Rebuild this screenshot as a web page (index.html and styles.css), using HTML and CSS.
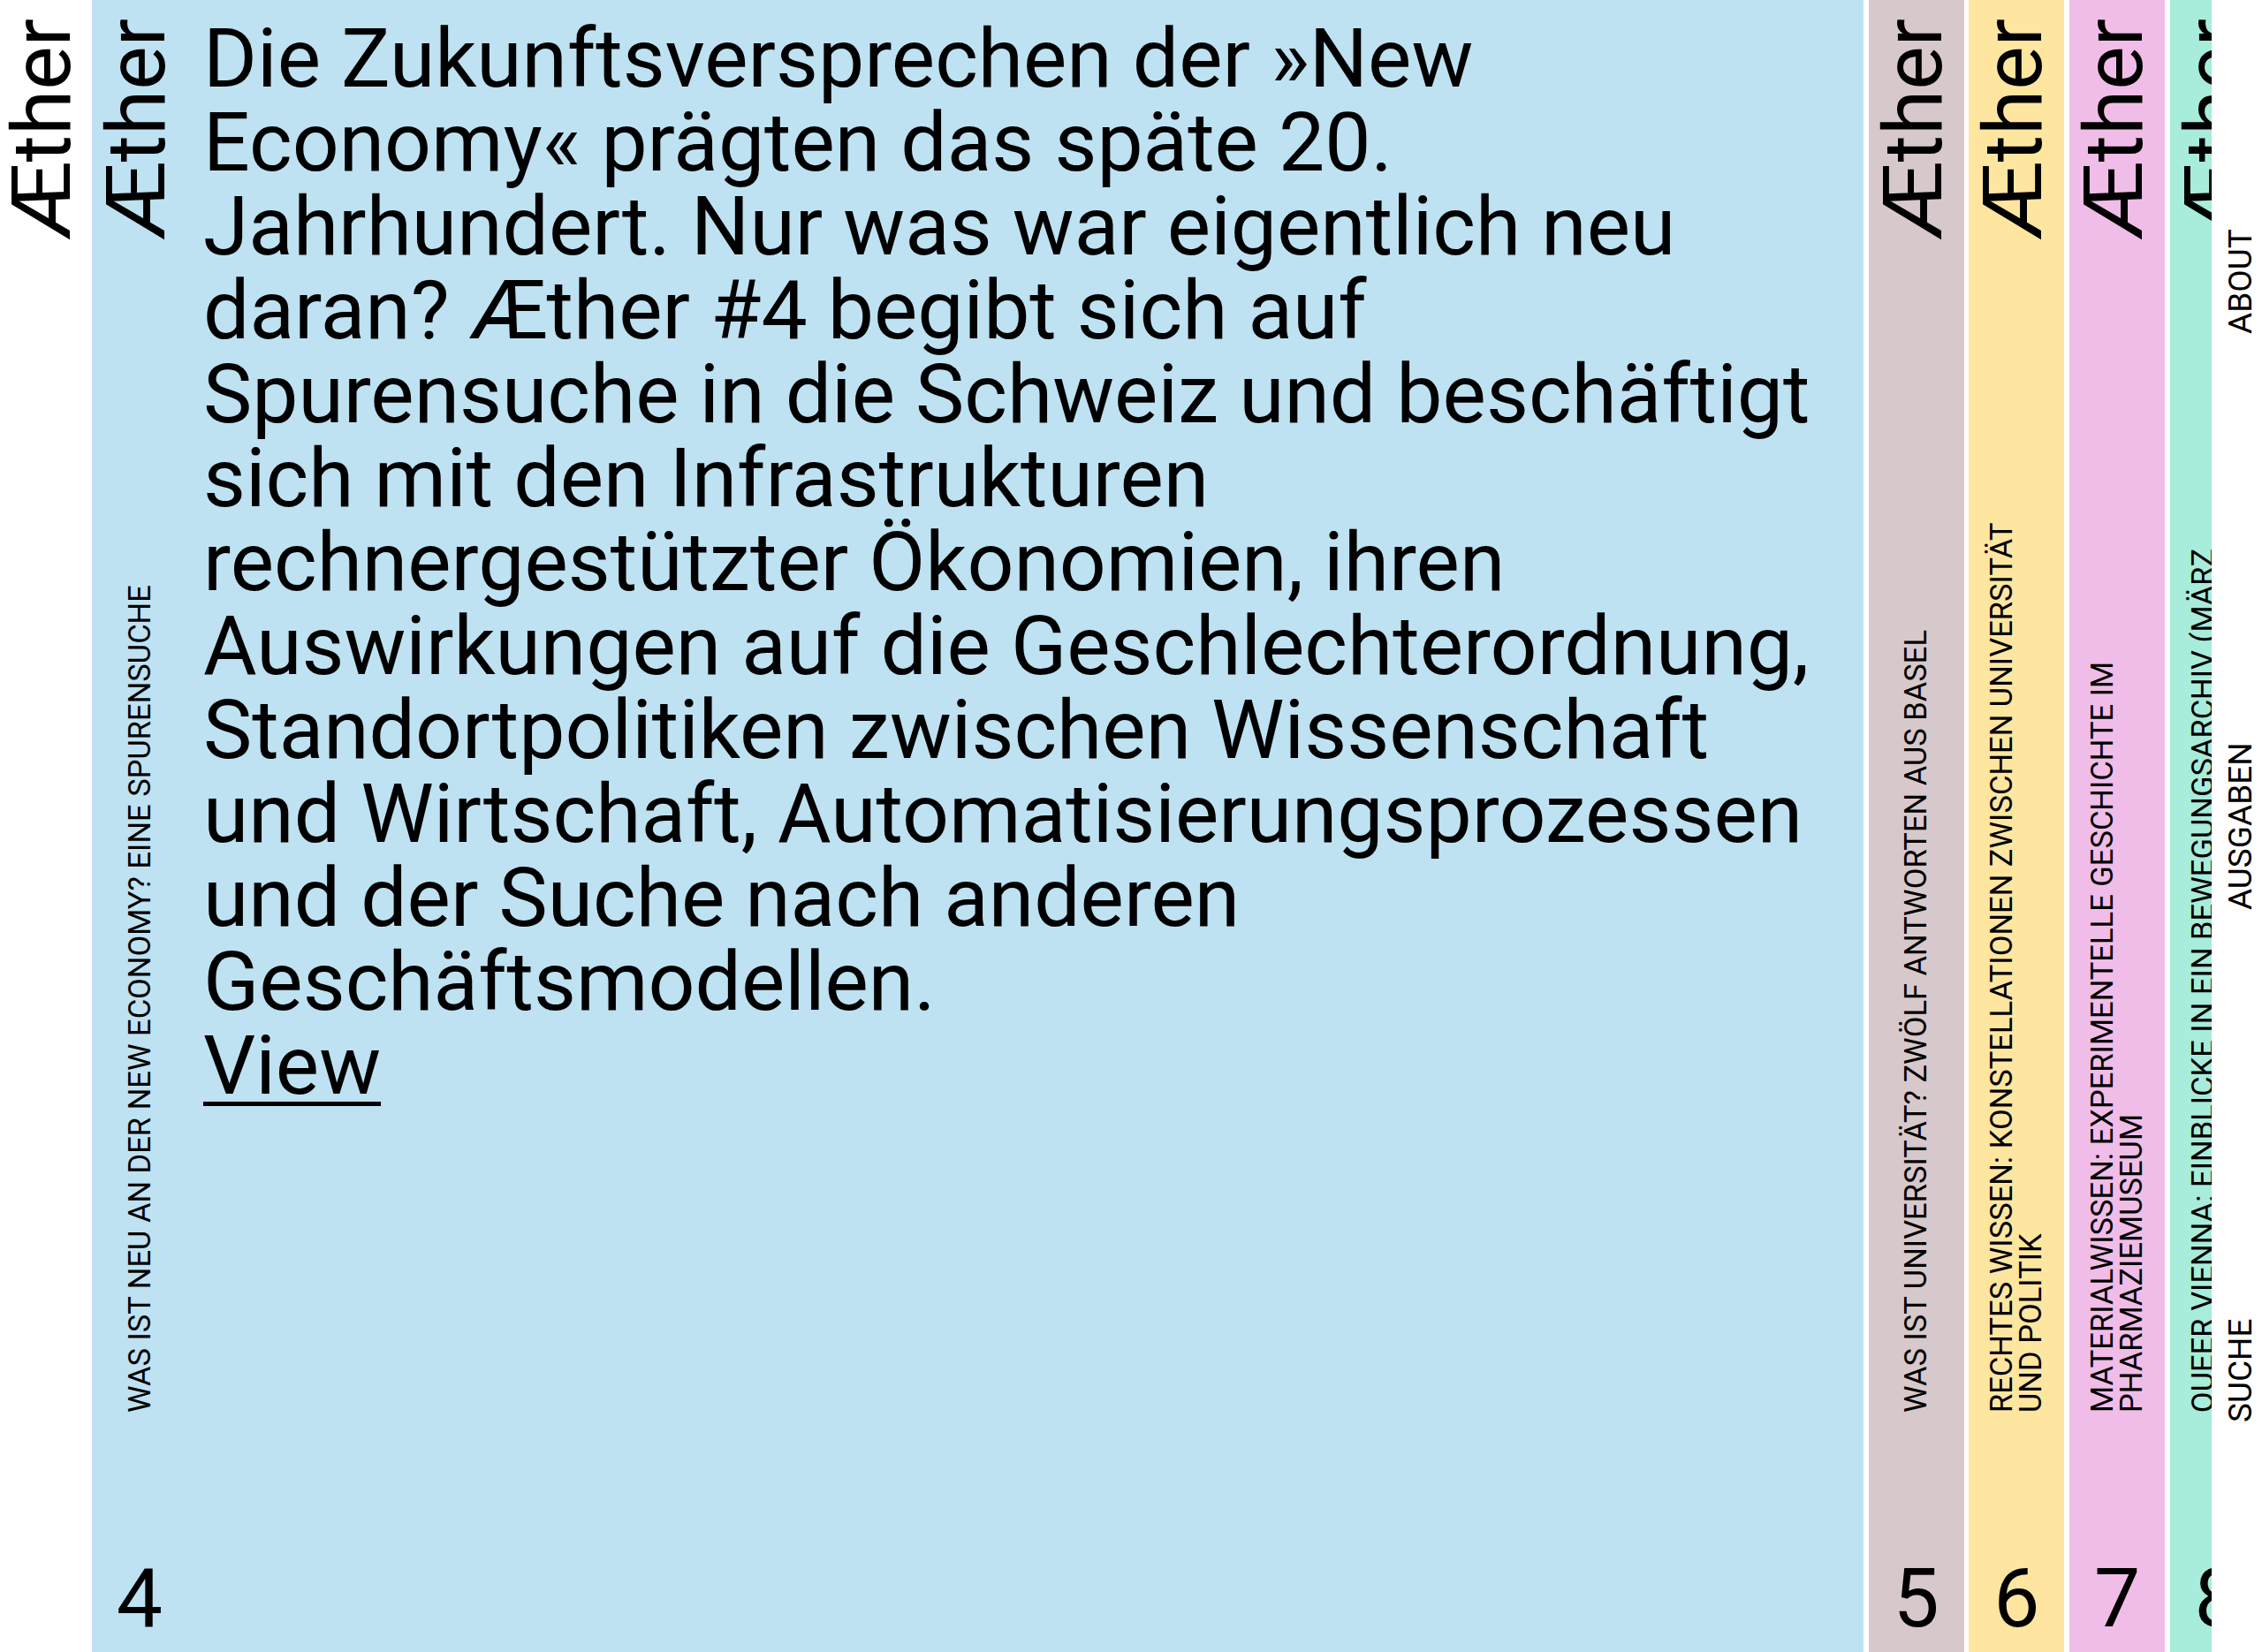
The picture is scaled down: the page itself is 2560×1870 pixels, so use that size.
FILE: index.html
```html
<!DOCTYPE html>
<html lang="de">
<head>
<meta charset="utf-8">
<title>Æther</title>
<link rel="stylesheet" href="styles.css">
</head>
<body>
<div class="page">
  <div class="brand-col">
    <div class="vert brand">Æther</div>
  </div>

  <main class="issues">
    <section class="issue open blue">
      <div class="spine">
        <div class="vert brand">Æther</div>
        <div class="vert title">WAS IST NEU AN DER NEW ECONOMY? EINE SPURENSUCHE</div>
        <div class="num">4</div>
      </div>
      <div class="intro">
        <p class="lead">Die Zukunftsversprechen der »New<br>Economy« prägten das späte 20.<br>Jahrhundert. Nur was war eigentlich neu<br>daran? Æther #4 begibt sich auf<br>Spurensuche in die Schweiz und beschäftigt<br>sich mit den Infrastrukturen<br>rechnergestützter Ökonomien, ihren<br>Auswirkungen auf die Geschlechterordnung,<br>Standortpolitiken zwischen Wissenschaft<br>und Wirtschaft, Automatisierungsprozessen<br>und der Suche nach anderen<br>Geschäftsmodellen.<br><a class="view" href="#">View</a></p>
      </div>
    </section>

    <section class="issue brown">
      <div class="spine">
        <div class="vert brand">Æther</div>
        <div class="vert title">WAS IST UNIVERSITÄT? ZWÖLF ANTWORTEN AUS BASEL</div>
        <div class="num">5</div>
      </div>
    </section>

    <section class="issue yellow">
      <div class="spine">
        <div class="vert brand">Æther</div>
        <div class="vert title">RECHTES WISSEN: KONSTELLATIONEN ZWISCHEN UNIVERSITÄT UND POLITIK</div>
        <div class="num">6</div>
      </div>
    </section>

    <section class="issue pink">
      <div class="spine">
        <div class="vert brand">Æther</div>
        <div class="vert title">MATERIALWISSEN: EXPERIMENTELLE GESCHICHTE IM PHARMAZIEMUSEUM</div>
        <div class="num">7</div>
      </div>
    </section>

    <section class="issue teal">
      <div class="spine">
        <div class="vert brand">Æther</div>
        <div class="vert title">QUEER VIENNA: EINBLICKE IN EIN BEWEGUNGSARCHIV (MÄRZ 2024)</div>
        <div class="num">8</div>
      </div>
    </section>
  </main>

  <nav class="side-nav">
    <div class="vert nav-list">
      <a href="#">SUCHE</a>
      <a href="#">AUSGABEN</a>
      <a href="#">ABOUT</a>
    </div>
  </nav>
</div>
</body>
</html>
```

FILE: styles.css
```css
html, body {
  margin: 0;
  padding: 0;
  background: #ffffff;
}

body {
  font-family: Roboto, "Liberation Sans", sans-serif;
  color: #000000;
  width: 2560px;
  height: 1870px;
  overflow: hidden;
}

.page {
  display: flex;
  height: 1870px;
}

.vert {
  writing-mode: vertical-rl;
  transform: rotate(180deg);
  white-space: nowrap;
}

.brand {
  font-size: 93px;
  line-height: 93px;
  flex: none;
}

.brand-col {
  width: 104px;
  flex: none;
  padding-top: 21px;
  padding-left: 1px;
  box-sizing: border-box;
  display: flex;
  flex-direction: column;
  align-items: flex-start;
}

.issues {
  flex: 1;
  min-width: 0;
  display: flex;
  gap: 5.7px;
  overflow: hidden;
}

.issue {
  flex: none;
  width: 108px;
  height: 1870px;
  display: flex;
}

.issue.open {
  width: 2005px;
}

.blue { background: #bee2f2; }
.brown { background: #d7c9cb; }
.yellow { background: #fee6a0; }
.pink { background: #f0bde8; }
.teal { background: #a8ecdb; }

.spine {
  width: 108px;
  flex: none;
  box-sizing: border-box;
  padding: 21px 0 14px;
  display: flex;
  flex-direction: column;
  align-items: center;
}

.spine .brand {
  align-self: flex-start;
  margin-left: 4px;
}

.title {
  white-space: normal;
  font-size: 34.5px;
  line-height: 33px;
  height: 1030px;
  margin-top: auto;
  flex: none;
}

.num {
  margin-top: 164px;
  font-size: 93px;
  line-height: 93px;
  width: 100%;
  text-align: center;
}

.intro {
  flex: 1;
  padding: 19px 0 0 18px;
}

.lead {
  margin: 0;
  font-size: 93px;
  line-height: 95px;
  white-space: nowrap;
}

.view {
  color: #000000;
  text-decoration: underline;
  text-decoration-thickness: 5px;
  text-underline-offset: 9px;
}

.side-nav {
  width: 57px;
  flex: none;
  box-sizing: border-box;
  padding: 259px 0 0 15px;
}

.nav-list {
  display: flex;
  justify-content: space-between;
  height: 1351px;
  font-size: 37px;
  line-height: 36px;
}

.nav-list a {
  color: #000000;
  text-decoration: none;
}
```
